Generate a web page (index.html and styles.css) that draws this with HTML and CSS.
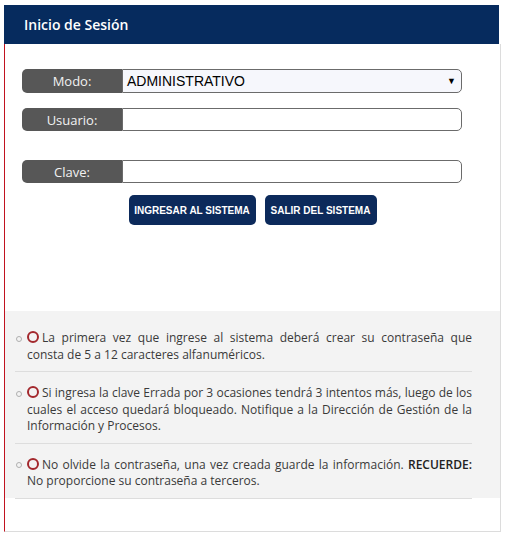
FILE: index.html
```html
<!DOCTYPE html>
<html lang="es">
<head>
<meta charset="utf-8">
<title>Inicio de Sesión</title>
<link rel="stylesheet" href="styles.css">
</head>
<body>
<div class="panel">
  <div class="panel-header">Inicio de Sesión</div>
  <div class="panel-body">
    <form class="login">
      <div class="row row-modo">
        <span class="label">Modo:</span>
        <div class="select"><span>ADMINISTRATIVO</span><span class="arrow">▼</span></div>
      </div>
      <div class="row row-user">
        <span class="label">Usuario:</span>
        <div class="input"></div>
      </div>
      <div class="row row-pass">
        <span class="label">Clave:</span>
        <div class="input"></div>
      </div>
      <div class="buttons">
        <button type="button" class="btn btn-in">INGRESAR AL SISTEMA</button>
        <button type="button" class="btn btn-out">SALIR DEL SISTEMA</button>
      </div>
    </form>
    <div class="notes">
      <ul>
        <li><span class="dot"></span><p><span class="ring"></span>La primera vez que ingrese al sistema deberá crear su contraseña que consta de 5 a 12 caracteres alfanuméricos.</p></li>
        <li><span class="dot"></span><p><span class="ring"></span>Si ingresa la clave Errada por 3 ocasiones tendrá 3 intentos más, luego de los cuales el acceso quedará bloqueado. Notifique a la Dirección de Gestión de la Información y Procesos.</p></li>
        <li><span class="dot"></span><p><span class="ring"></span>No olvide la contraseña, una vez creada guarde la información. <b>RECUERDE:</b> No proporcione su contraseña a terceros.</p></li>
      </ul>
    </div>
  </div>
</div>
</body>
</html>
```

FILE: styles.css
```css
* { box-sizing: border-box; }
html, body { margin: 0; padding: 0; background: #fff; }
body { padding: 5px 4px 0 4px; font-family: "Open Sans", sans-serif; }

.panel { width: 497px; }
.panel-header {
  height: 39px;
  background: #062b5e;
  color: #fff;
  font-size: 14px;
  font-weight: 600;
  padding-left: 20px;
  line-height: 39px;
  margin-right: 2px;
}
.panel-body {
  border-left: 1px solid #c1121f;
  border-right: 1px solid #dcdcdc;
  border-bottom: 1px solid #dcdcdc;
  height: 488px;
}

.login { padding: 25px 0 0 17px; height: 267px; }
.row { display: flex; width: 440px; }
.row-modo { height: 24px; }
.row-user { height: 23px; margin-top: 15px; }
.row-pass { height: 23px; margin-top: 29px; }
.label {
  width: 100px;
  flex: none;
  background: #575757;
  color: #f2f2f2;
  border-radius: 5px 0 0 5px;
  font-size: 13px;
  font-weight: 500;
  text-align: center;
  display: flex;
  align-items: center;
  justify-content: center;
}
.select, .input {
  flex: 1;
  border: 1px solid #6b6b6b;
  border-radius: 0 5px 5px 0;
}
.input { background: #fff; }
.select {
  background: #f6f7fc;
  display: flex;
  align-items: center;
  justify-content: space-between;
  font-family: "Liberation Sans", Arial, sans-serif;
  font-size: 14px;
  color: #000;
  padding: 0 5px 0 4px;
}
.arrow { font-size: 9px; }

.buttons {
  display: flex;
  justify-content: center;
  gap: 9px;
  margin-top: 12px;
  padding-right: 17px;
}
.btn {
  height: 30px;
  border: none;
  border-radius: 5px;
  background: #0c2a5b;
  color: #fff;
  font-family: "Liberation Sans", Arial, sans-serif;
  font-weight: bold;
  font-size: 10px;
  padding: 0;
  margin: 0;
}
.btn-in { width: 127px; }
.btn-out { width: 112px; }

.notes {
  background: #f3f3f3;
  height: 187px;
  padding: 6px 28px 0 10px;
}
.notes ul { list-style: none; margin: 0; padding: 0; }
.notes li {
  display: flex;
  border-bottom: 1px solid #dddddd;
  padding: 13px 0 8px 0;
}
.dot {
  flex: none;
  width: 12px;
  height: 17px;
  display: flex;
  align-items: center;
  padding-left: 1px;
}
.dot::before {
  content: "";
  width: 4px;
  height: 4px;
  border: 1px solid #b0b0b0;
  border-radius: 50%;
}
.notes p {
  margin: 0;
  font-size: 12px;
  line-height: 16.5px;
  color: #3a3a3a;
  text-align: justify;
}
.notes b { font-weight: 600; color: #222; }
.ring {
  display: inline-block;
  width: 12px;
  height: 12px;
  border: 2.5px solid #a3282d;
  border-radius: 50%;
  margin-right: 3px;
  vertical-align: -1px;
}
```
